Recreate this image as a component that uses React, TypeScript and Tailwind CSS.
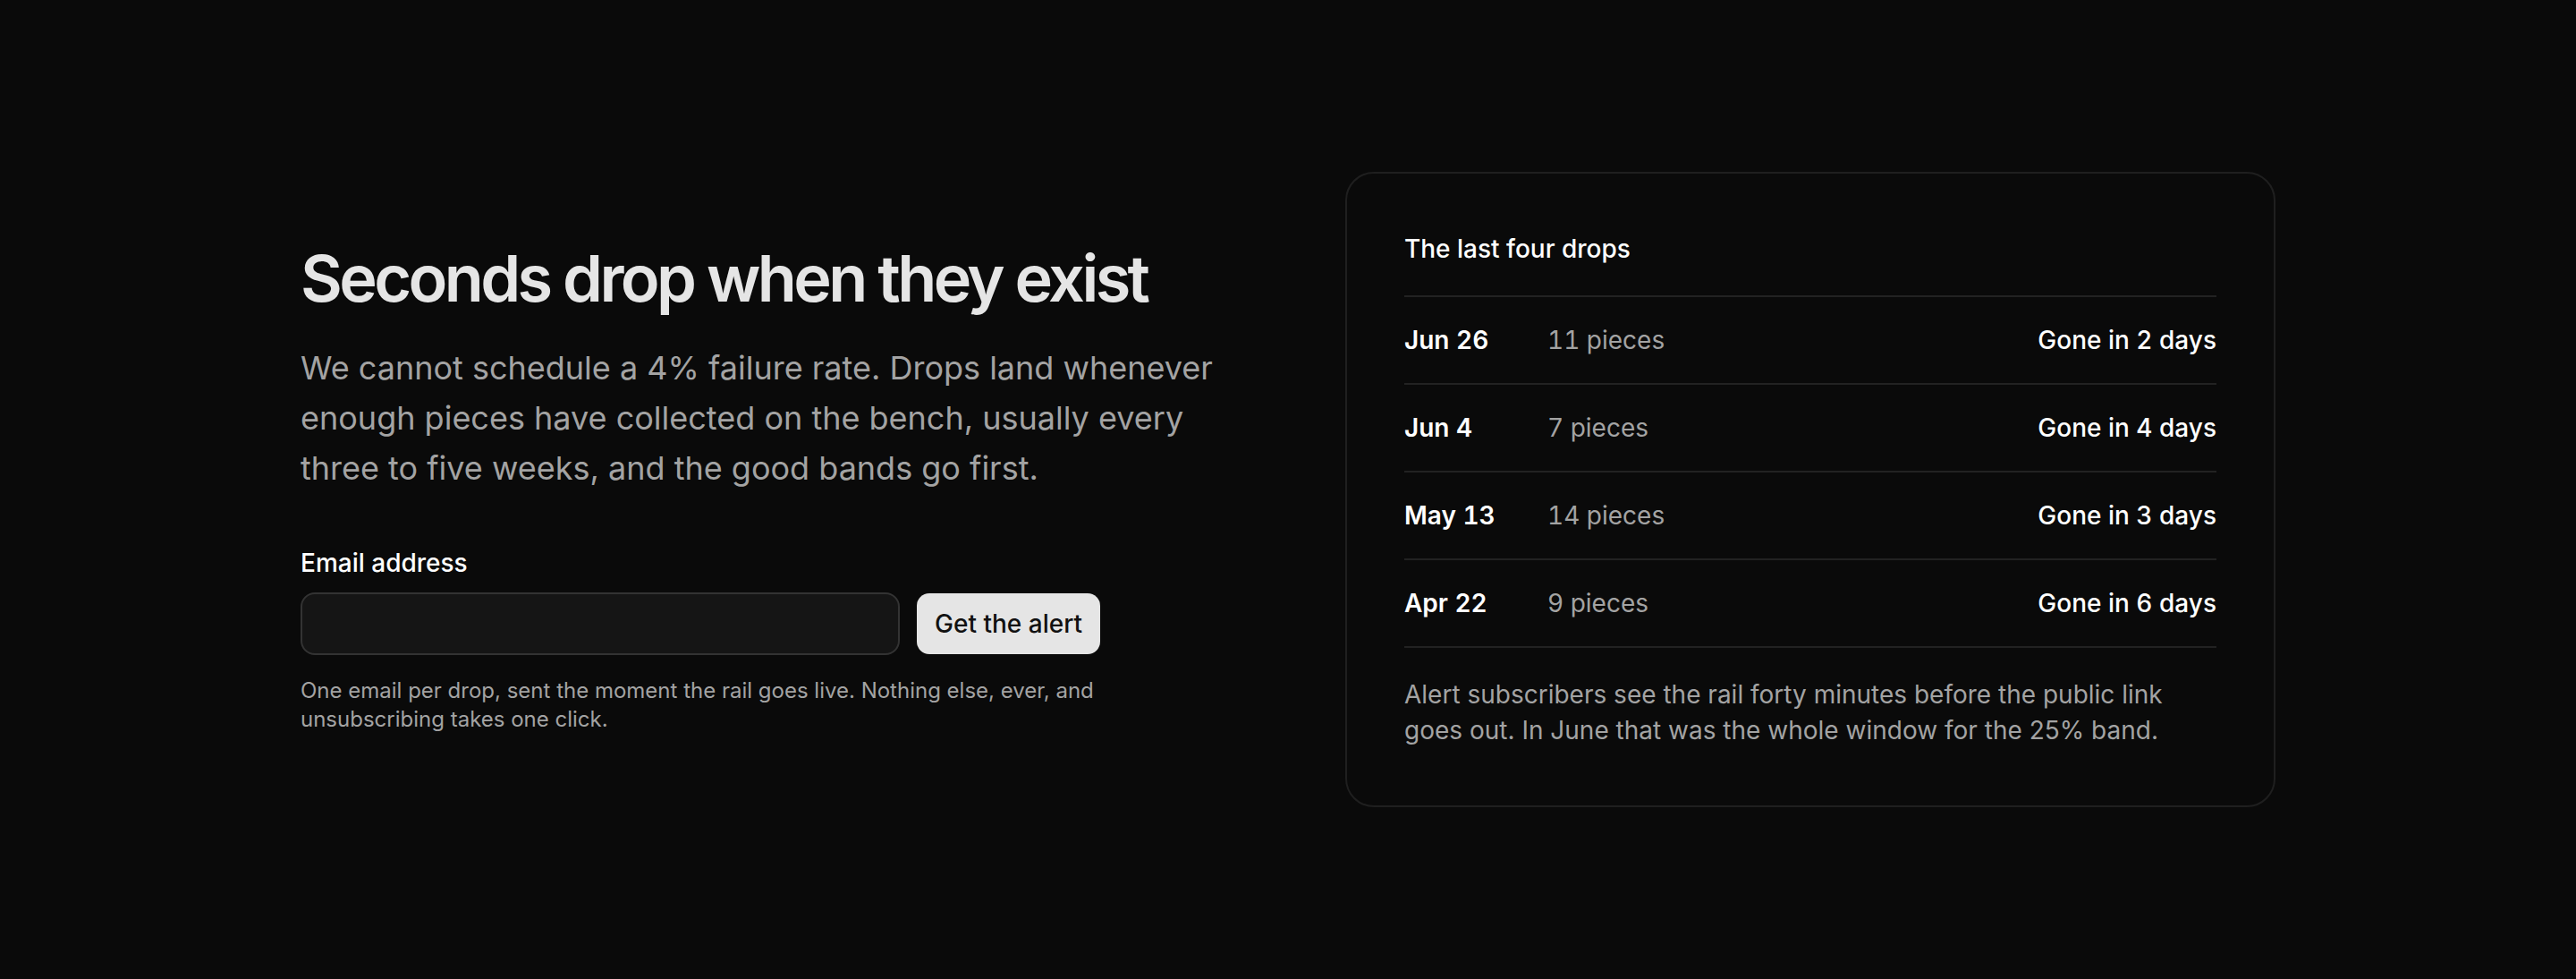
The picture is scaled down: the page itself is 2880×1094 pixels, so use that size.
const drops = [
  { date: "Jun 26", pieces: "11 pieces", gone: "Gone in 2 days" },
  { date: "Jun 4", pieces: "7 pieces", gone: "Gone in 4 days" },
  { date: "May 13", pieces: "14 pieces", gone: "Gone in 3 days" },
  { date: "Apr 22", pieces: "9 pieces", gone: "Gone in 6 days" },
];

export default function App() {
  return (
    <main
      className="flex min-h-screen items-center justify-center bg-[#0a0a0a]"
      style={{ fontFamily: "Inter, 'Noto Sans', sans-serif" }}
    >
      <div className="grid w-[2208px] grid-cols-2 items-center gap-x-[128px]">
        <section>
          <h1 className="text-[72px] font-semibold leading-none tracking-tighter text-[#e5e5e5]">
            Seconds drop when they exist
          </h1>
          <p className="mt-[36px] text-[36px] leading-[56px] text-[#a3a3a3]">
            We cannot schedule a 4% failure rate. Drops land whenever enough pieces have
            collected on the bench, usually every three to five weeks, and the good bands go
            first.
          </p>
          <form className="mt-[58px] max-w-[894px]" onSubmit={(e) => e.preventDefault()}>
            <label htmlFor="email" className="block text-[28px] font-medium leading-[40px] text-white">
              Email address
            </label>
            <div className="mt-[13px] flex items-center gap-[19px]">
              <input
                id="email"
                type="email"
                className="h-[70px] flex-1 rounded-[16px] border-2 border-[#333333] bg-[#151515] px-5 text-[28px] text-white outline-none"
              />
              <button
                type="submit"
                className="h-[68px] rounded-[14px] bg-[#e5e5e5] px-5 text-[28px] font-medium text-[#111111]"
              >
                Get the alert
              </button>
            </div>
            <p className="mt-6 text-[24px] leading-[32px] text-[#a3a3a3]">
              One email per drop, sent the moment the rail goes live. Nothing else, ever, and
              unsubscribing takes one click.
            </p>
          </form>
        </section>

        <section className="rounded-[32px] border-2 border-[#1f1f1f] p-16">
          <h2 className="border-b-2 border-[#222222] pb-8 text-[28px] font-medium leading-[40px] text-white">
            The last four drops
          </h2>
          <ul>
            {drops.map((d) => (
              <li
                key={d.date}
                className="flex items-center border-b-2 border-[#222222] py-7 text-[28px] leading-[40px] tabular-nums"
              >
                <span className="w-[160px] font-semibold text-white">{d.date}</span>
                <span className="flex-1 text-[#a3a3a3]">{d.pieces}</span>
                <span className="font-medium text-white">{d.gone}</span>
              </li>
            ))}
          </ul>
          <p className="mt-8 text-[28px] leading-[40px] text-[#a3a3a3]">
            Alert subscribers see the rail forty minutes before the public link goes out. In
            June that was the whole window for the 25% band.
          </p>
        </section>
      </div>
    </main>
  );
}
